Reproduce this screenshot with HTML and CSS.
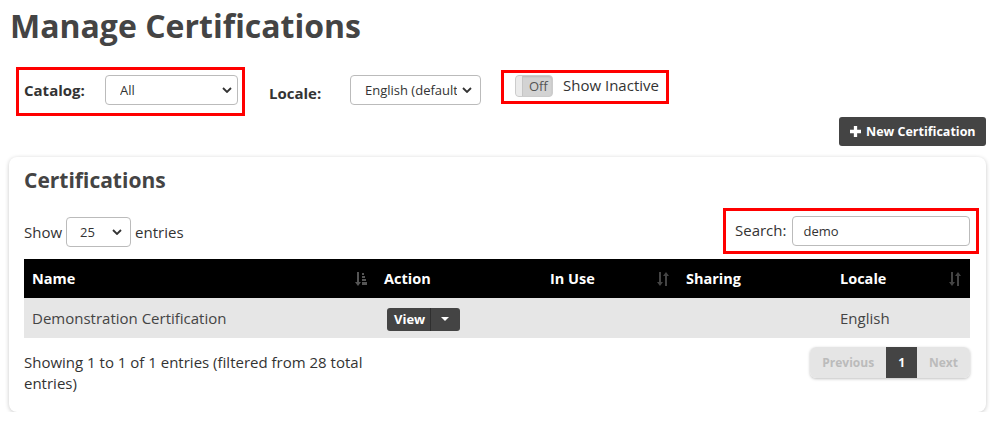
FILE: index.html
```html
<!DOCTYPE html>
<html>
<head>
<meta charset="utf-8">
<link rel="stylesheet" href="styles.css">
</head>
<body>
<div class="page">
  <h1 class="title">Manage Certifications</h1>
  <div class="filters">
    <div class="redbox catalog-box">
      <label class="flabel">Catalog:</label>
      <div class="select sel-catalog"><span>All</span><svg class="chev" viewBox="0 0 10 6"><path d="M1 1 L5 5 L9 1" fill="none" stroke="#333" stroke-width="1.8"/></svg></div>
    </div>
    <label class="flabel locale-label">Locale:</label>
    <div class="select sel-locale"><span>English (default)</span><svg class="chev" viewBox="0 0 10 6"><path d="M1 1 L5 5 L9 1" fill="none" stroke="#333" stroke-width="1.8"/></svg></div>
    <div class="redbox inactive-box">
      <div class="toggle"><span class="handle"></span><span class="off">Off</span></div>
      <span class="inactive-text">Show Inactive</span>
    </div>
  </div>
  <div class="actions">
    <button class="btn-new"><svg class="plus" viewBox="0 0 10 10"><path d="M3.5 0 H6.5 V3.5 H10 V6.5 H6.5 V10 H3.5 V6.5 H0 V3.5 H3.5 Z" fill="#fff"/></svg>New Certification</button>
  </div>
  <div class="card">
    <h2 class="card-title">Certifications</h2>
    <div class="table-top">
      <div class="length">Show <div class="select sel-len"><span>25</span><svg class="chev" viewBox="0 0 10 6"><path d="M1 1 L5 5 L9 1" fill="none" stroke="#333" stroke-width="1.8"/></svg></div> entries</div>
      <div class="redbox search-box">
        <label>Search:</label>
        <div class="search-input">demo</div>
      </div>
    </div>
    <table class="grid">
      <thead>
        <tr>
          <th class="c-name">Name<svg class="sort sort-active" viewBox="0 0 12 14"><path d="M2 0 H4 V10 H6 L3 14 L0 10 H2 Z" fill="#555"/><rect x="7" y="1" width="2" height="2" fill="#555"/><rect x="7" y="4" width="3" height="2" fill="#555"/><rect x="7" y="7" width="4" height="2" fill="#555"/><rect x="7" y="10" width="5" height="3" fill="#555"/></svg></th>
          <th class="c-action">Action</th>
          <th class="c-inuse">In Use<svg class="sort" viewBox="0 0 12 14"><path d="M2 0 H4 V10 H6 L3 14 L0 10 H2 Z" fill="#444"/><path d="M8 14 H10 V4 H12 L9 0 L6 4 H8 Z" fill="#444"/></svg></th>
          <th class="c-sharing">Sharing</th>
          <th class="c-locale">Locale<svg class="sort" viewBox="0 0 12 14"><path d="M2 0 H4 V10 H6 L3 14 L0 10 H2 Z" fill="#444"/><path d="M8 14 H10 V4 H12 L9 0 L6 4 H8 Z" fill="#444"/></svg></th>
        </tr>
      </thead>
      <tbody>
        <tr>
          <td>Demonstration Certification</td>
          <td><div class="view-btn"><span class="view">View</span><span class="caret"><svg viewBox="0 0 8 4"><path d="M0 0 H8 L4 4 Z" fill="#fff"/></svg></span></div></td>
          <td></td>
          <td></td>
          <td>English</td>
        </tr>
      </tbody>
    </table>
    <div class="table-bottom">
      <div class="info">Showing 1 to 1 of 1 entries (filtered from 28 total entries)</div>
      <div class="pager">
        <span class="pg disabled">Previous</span>
        <span class="pg current">1</span>
        <span class="pg disabled">Next</span>
      </div>
    </div>
  </div>
</div>
</body>
</html>
```
FILE: styles.css
```css
* { box-sizing: border-box; }
html, body { margin: 0; padding: 0; background: #fff; }
body {
  font-family: "Open Sans", "Liberation Sans", sans-serif;
  font-size: 15px;
  color: #333;
}
.page { padding: 0 11px 0 9px; }
.title {
  margin: 0;
  padding: 6px 0 0 1px;
  font-size: 32px;
  font-weight: 700;
  color: #444;
  line-height: 40px;
  height: 67px;
}
.filters {
  display: flex;
  align-items: flex-start;
  padding-left: 7px;
  height: 51px;
}
.redbox { border: 3px solid #f00; }
.catalog-box {
  display: flex;
  align-items: center;
  width: 229px;
  height: 49px;
  padding: 0 4px 3px 5px;
}
.flabel { font-weight: 700; font-size: 15px; color: #333; }
.catalog-box .flabel { width: 81px; }
.select {
  display: flex;
  align-items: center;
  justify-content: space-between;
  height: 30px;
  border: 1px solid #bbb;
  border-radius: 4px;
  background: #fff;
  font-size: 13px;
  color: #333;
  padding: 0 8px 0 14px;
  overflow: hidden;
  white-space: nowrap;
}
.select span { overflow: hidden; }
.chev { width: 10px; height: 6px; flex: none; margin-left: 4px; }
.sel-catalog { width: 133px; padding-right: 5px; }
.locale-label { margin: 16px 0 0 24px; width: 81px; line-height: 20px; }
.sel-locale { width: 131px; margin-top: 8px; padding-left: 14px; }
.sel-locale span { width: 92px; }
.inactive-box {
  display: flex;
  align-items: center;
  margin: 3px 0 0 20px;
  width: 168px;
  height: 34px;
  padding: 0 0 0 11px;
}
.toggle {
  position: relative;
  width: 38px;
  height: 22px;
  border-radius: 4px;
  background: #d3d3d3;
  border: 1px solid #ccc;
  box-shadow: inset 0 1px 2px rgba(0,0,0,0.12);
  display: flex;
  align-items: center;
  margin-top: -2px;
}
.toggle .handle {
  width: 7px;
  height: 20px;
  background: #ebebeb;
  border-radius: 3px 0 0 3px;
  border-right: 1px solid #c5c5c5;
}
.toggle .off { font-size: 13px; color: #555; margin-left: 6px; }
.inactive-text { margin-left: 10px; font-size: 15px; color: #333; margin-top: -4px; }
.actions { display: flex; justify-content: flex-end; height: 39px; }
.btn-new {
  display: flex;
  align-items: center;
  height: 29px;
  width: 147px;
  background: #444;
  color: #fff;
  border: none;
  border-radius: 3px;
  font-family: inherit;
  font-weight: 700;
  font-size: 12.5px;
  padding: 0 0 0 11px;
  margin-top: -1px;
}
.plus { width: 11px; height: 11px; margin-right: 5px; }
.card {
  width: 977px;
  border-radius: 8px;
  box-shadow: 0 1px 4px rgba(0,0,0,0.22);
  padding: 10px 16px 18px 15px;
  background: #fff;
}
.card-title {
  margin: 0;
  font-size: 21px;
  font-weight: 700;
  color: #444;
  line-height: 26px;
  height: 41px;
}
.table-top {
  display: flex;
  justify-content: space-between;
  align-items: flex-start;
  height: 51px;
}
.length { display: flex; align-items: center; gap: 4px; margin-top: 9px; }
.sel-len { width: 65px; height: 30px; padding-left: 13px; }
.search-box {
  display: flex;
  align-items: center;
  width: 256px;
  height: 46px;
  margin-right: -9px;
  padding: 0 6px 0 9px;
}
.search-box label { margin-right: 6px; margin-top: -2px; }
.search-input {
  flex: 1;
  height: 30px;
  border: 1px solid #bbb;
  border-radius: 4px;
  padding: 5px 10px;
  font-size: 13px;
  color: #333;
}
.grid {
  width: 946px;
  border-collapse: collapse;
}
.grid th {
  background: #000;
  color: #fff;
  text-align: left;
  font-weight: 700;
  font-size: 14.5px;
  height: 39px;
  padding: 0 8px;
  position: relative;
}
.grid td {
  background: #e6e6e6;
  height: 40px;
  padding: 0 8px;
  color: #444;
  font-size: 15px;
}
.c-name { width: 352px; }
.c-action { width: 166px; }
.c-inuse { width: 136px; }
.c-sharing { width: 154px; }
.sort {
  position: absolute;
  right: 9px;
  top: 13px;
  width: 12px;
  height: 14px;
}
.view-btn {
  display: inline-flex;
  height: 23px;
  background: #444;
  border-radius: 3px;
  color: #fff;
  font-weight: 700;
  font-size: 13px;
  align-items: stretch;
  margin-left: 3px;
  margin-top: 2px;
}
.view-btn .view { padding: 0 5px 0 7px; display: flex; align-items: center; border-right: 1px solid #2f2f2f; }
.view-btn .caret { display: flex; align-items: center; padding: 0 11px 0 10px; }
.view-btn .caret svg { width: 8px; height: 4px; }
.table-bottom {
  display: flex;
  justify-content: space-between;
  align-items: flex-start;
  padding-top: 9px;
}
.info { width: 380px; line-height: 21px; padding-top: 5px; }
.pager {
  display: flex;
  height: 31px;
  border-radius: 6px;
  box-shadow: 0 1px 3px rgba(0,0,0,0.25);
  overflow: hidden;
}
.pg {
  display: flex;
  align-items: center;
  padding: 0 12px;
  font-weight: 700;
  font-size: 12px;
  background: #e5e5e5;
}
.pg.disabled { color: #bbb; }
.pg.current { background: #444; color: #fff; padding: 0 12px; }
```
